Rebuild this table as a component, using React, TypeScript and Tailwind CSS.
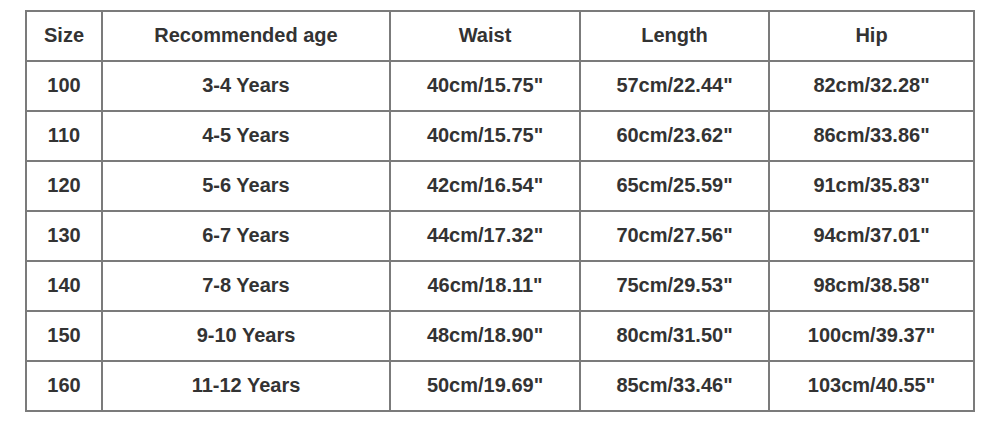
const header = ["Size", "Recommended age", "Waist", "Length", "Hip"];

const rows: string[][] = [
  ["100", "3-4 Years", '40cm/15.75"', '57cm/22.44"', '82cm/32.28"'],
  ["110", "4-5 Years", '40cm/15.75"', '60cm/23.62"', '86cm/33.86"'],
  ["120", "5-6 Years", '42cm/16.54"', '65cm/25.59"', '91cm/35.83"'],
  ["130", "6-7 Years", '44cm/17.32"', '70cm/27.56"', '94cm/37.01"'],
  ["140", "7-8 Years", '46cm/18.11"', '75cm/29.53"', '98cm/38.58"'],
  ["150", "9-10 Years", '48cm/18.90"', '80cm/31.50"', '100cm/39.37"'],
  ["160", "11-12 Years", '50cm/19.69"', '85cm/33.46"', '103cm/40.55"'],
];

export default function App() {
  const all = [header, ...rows];
  return (
    <div className="w-[1000px] h-[421px] bg-white pt-[10px] pl-[25px] font-['Liberation_Sans',Arial,sans-serif]">
      <div className="inline-grid grid-cols-[74px_286px_188px_187px_203px] gap-[2px] p-[2px] bg-[#7b7b7b]">
        {all.map((row, i) =>
          row.map((cell, j) => (
            <div
              key={`${i}-${j}`}
              className="h-[48px] bg-white flex items-center justify-center pb-[2px] text-[20px] font-bold text-[#333333]"
            >
              {cell}
            </div>
          )),
        )}
      </div>
    </div>
  );
}
